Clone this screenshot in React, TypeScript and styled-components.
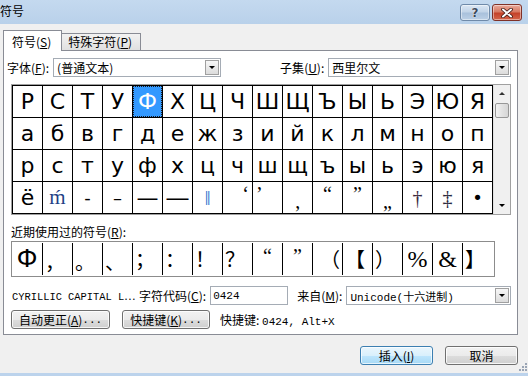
import styled, { createGlobalStyle } from 'styled-components';

const GlobalStyle = createGlobalStyle`
  html, body {
    margin: 0;
    padding: 0;
    background: #f0f0f0;
  }
  body {
    font-family: "Noto Sans CJK SC", "DejaVu Sans", sans-serif;
    font-size: 12px;
    color: #000;
  }
`;

const cjk = `"Noto Sans CJK SC", sans-serif`;
const mono = `"Liberation Mono", "Noto Sans CJK SC", monospace`;

const Window = styled.div`
  position: relative;
  width: 528px;
  height: 376px;
  box-sizing: border-box;
  display: flex;
  flex-direction: column;
  background: #f0f0f0;
  border-bottom: 3px solid #bcd3ec;
  overflow: hidden;
`;

const TitleBar = styled.div`
  height: 24px;
  flex: none;
  display: flex;
  align-items: flex-start;
  background: linear-gradient(#c4d9ef, #b9d1ea);
`;

const Title = styled.div`
  font-family: ${cjk};
  font-size: 12px;
  line-height: 24px;
  margin-top: -1px;
`;

const TitleButtons = styled.div`
  margin-left: auto;
  margin-right: 6px;
  margin-top: 4px;
  display: flex;
  gap: 2px;
`;

const CaptionButton = styled.div<{ $close?: boolean }>`
  width: 30px;
  height: 17px;
  box-sizing: border-box;
  border-radius: 3px;
  border: 1px solid ${(p) => (p.$close ? '#7f3127' : '#6f8aa9')};
  background: ${(p) =>
    p.$close
      ? 'linear-gradient(#e9a99b 0%, #d77a63 45%, #c4422a 55%, #d5654a 100%)'
      : 'linear-gradient(#dbe7f4 0%, #c2d4e8 45%, #a9c1dc 55%, #bcd0e6 100%)'};
  box-shadow: inset 0 0 0 1px rgba(255, 255, 255, 0.45);
  display: flex;
  align-items: center;
  justify-content: center;
`;

const HelpGlyph = styled.span`
  font-family: "DejaVu Sans", sans-serif;
  font-weight: bold;
  font-size: 12px;
  color: #3b4a5c;
  text-shadow: 0 0 1px #fff, 0 0 1px #fff;
  line-height: 1;
`;

const TabRow = styled.div`
  height: 27px;
  flex: none;
  display: flex;
  align-items: flex-end;
  padding-left: 3px;
`;

const Tab = styled.div<{ $active?: boolean }>`
  position: relative;
  z-index: 1;
  box-sizing: border-box;
  height: ${(p) => (p.$active ? '21px' : '17px')};
  margin-bottom: ${(p) => (p.$active ? '0' : '1px')};
  padding: ${(p) => (p.$active ? '3px 10px 0 8px' : '0 8px 0 6px')};
  border: 1px solid #898c95;
  border-bottom: none;
  border-left: ${(p) => (p.$active ? '1px solid #898c95' : 'none')};
  background: ${(p) => (p.$active ? '#fff' : 'linear-gradient(#f2f2f2, #e0e0e0)')};
  font-family: ${cjk};
  font-size: 12px;
  line-height: 16px;
  white-space: nowrap;
`;

const Panel = styled.div`
  flex: none;
  height: 285px;
  margin: -1px 10px 0 3px;
  box-sizing: border-box;
  border: 1px solid #898c95;
  background: #fff;
  padding: 7px 6px 0 7px;
  display: flex;
  flex-direction: column;
`;

const Row = styled.div<{ $top?: number }>`
  display: flex;
  align-items: center;
  height: 19px;
  margin-top: ${(p) => p.$top ?? 0}px;
`;

const FontRow = styled(Row)`
  margin-left: -4px;
`;

const Label = styled.span<{ $gap?: number }>`
  font-family: ${cjk};
  font-size: 12px;
  white-space: nowrap;
  margin-left: ${(p) => p.$gap ?? 0}px;
  margin-right: 4px;
`;

const Combo = styled.div<{ $w?: number }>`
  box-sizing: border-box;
  height: 19px;
  width: ${(p) => (p.$w ? `${p.$w}px` : 'auto')};
  flex: ${(p) => (p.$w ? 'none' : '1')};
  border: 1px solid #a5acb5;
  background: #fff;
  display: flex;
  align-items: center;
  padding-left: 3px;
  font-family: ${cjk};
  font-size: 12px;
`;

const ComboText = styled.span<{ $mono?: boolean }>`
  flex: 1;
  font-family: ${(p) => (p.$mono ? mono : cjk)};
  font-size: ${(p) => (p.$mono ? '11px' : '12px')};
  white-space: nowrap;
`;

const DropButton = styled.div`
  width: 14px;
  height: 15px;
  margin-right: 1px;
  box-sizing: border-box;
  border: 1px solid #a0a0a0;
  background: linear-gradient(#f7f7f7, #dcdcdc);
  display: flex;
  align-items: center;
  justify-content: center;
`;

const Arrow = styled.span<{ $up?: boolean }>`
  width: 0;
  height: 0;
  border-left: 3px solid transparent;
  border-right: 3px solid transparent;
  ${(p) => (p.$up ? 'border-bottom: 3px solid #333;' : 'border-top: 3px solid #000;')}
`;

const GridFrame = styled.div`
  margin-top: 7px;
  width: 500px;
  box-sizing: border-box;
  border: 1px solid #a0a0a0;
  display: flex;
`;

const CharGrid = styled.div`
  display: grid;
  grid-template-columns: repeat(16, 29px);
  grid-auto-rows: 31px;
  gap: 1px;
  padding: 1px;
  background: #000;
`;

const Cell = styled.div<{
  $serif?: boolean;
  $size?: number;
  $v?: 'top' | 'bottom';
  $h?: 'left' | 'right';
  $color?: string;
  $selected?: boolean;
}>`
  background: ${(p) => (p.$selected ? '#3399ff' : '#fff')};
  color: ${(p) => (p.$selected ? '#fff' : p.$color ?? '#000')};
  outline: ${(p) => (p.$selected ? '1px dotted #1a1a1a' : 'none')};
  outline-offset: -1px;
  display: flex;
  align-items: ${(p) => (p.$v === 'top' ? 'flex-start' : p.$v === 'bottom' ? 'flex-end' : 'center')};
  justify-content: ${(p) => (p.$h === 'left' ? 'flex-start' : p.$h === 'right' ? 'flex-end' : 'center')};
  padding: ${(p) => (p.$v ? '2px 3px' : '0 2px')};
  box-sizing: border-box;
  font-family: ${(p) => (p.$serif ? `"Liberation Serif", serif` : `"DejaVu Sans", sans-serif`)};
  font-size: ${(p) => p.$size ?? 22}px;
  line-height: 1;
`;

const ScrollBar = styled.div`
  width: 17px;
  margin-left: 0;
  background: #f0f0f0;
  display: flex;
  flex-direction: column;
  border-left: 1px solid #e0e0e0;
`;

const ScrollArrow = styled.div`
  height: 17px;
  box-sizing: border-box;
  margin: 0 1px;
  display: flex;
  align-items: center;
  justify-content: center;
`;

const ScrollTrack = styled.div`
  flex: 1;
`;

const Thumb = styled.div`
  height: 15px;
  margin: 1px 1px 0;
  box-sizing: border-box;
  border: 1px solid #979797;
  border-radius: 2px;
  background: linear-gradient(90deg, #f3f3f3, #e2e2e2 50%, #d6d6d6);
`;

const RecentLabel = styled.div`
  margin-top: 9px;
  margin-left: 0;
  height: 16px;
  line-height: 16px;
  font-family: ${cjk};
  font-size: 12px;
`;

const RecentBox = styled.div`
  margin-top: 1px;
  width: 484px;
  height: 36px;
  box-sizing: border-box;
  border: 1px solid #8c8c8c;
  display: flex;
`;

const RecentCell = styled.div<{
  $first?: boolean;
  $serif?: boolean;
  $sans?: boolean;
  $size?: number;
  $v?: 'top' | 'bottom';
  $h?: 'left' | 'right';
}>`
  width: 30px;
  flex: none;
  margin: 1px 0;
  box-sizing: border-box;
  border-left: ${(p) => (p.$first ? 'none' : '1px solid #000')};
  display: flex;
  align-items: ${(p) => (p.$v === 'top' ? 'flex-start' : p.$v === 'bottom' ? 'flex-end' : 'center')};
  justify-content: ${(p) => (p.$h === 'left' ? 'flex-start' : p.$h === 'right' ? 'flex-end' : 'center')};
  padding: 3px 2px;
  font-family: ${(p) =>
    p.$sans ? `"DejaVu Sans", sans-serif` : p.$serif ? `"Liberation Serif", serif` : cjk};
  font-size: ${(p) => p.$size ?? 20}px;
  line-height: 1;
  &:last-child {
    flex: 1;
  }
`;

const CharName = styled.span`
  width: 127px;
  flex: none;
  padding-left: 1px;
  font-family: ${mono};
  font-size: 10.4px;
  white-space: nowrap;
  overflow: hidden;
`;

const CodeInput = styled.div`
  width: 78px;
  height: 19px;
  box-sizing: border-box;
  border: 1px solid #a5acb5;
  background: #fff;
  padding-left: 2px;
  display: flex;
  align-items: center;
  font-family: ${mono};
  font-size: 11px;
`;

const Button = styled.div<{ $w: number; $focused?: boolean }>`
  width: ${(p) => p.$w}px;
  height: 19px;
  box-sizing: border-box;
  border: 1px solid ${(p) => (p.$focused ? '#3c7fb1' : '#707070')};
  border-radius: 3px;
  background: ${(p) =>
    p.$focused
      ? 'linear-gradient(#eaf6fd 0%, #d9f0fc 50%, #bee6fd 51%, #a7d9f5 100%)'
      : 'linear-gradient(#f2f2f2 0%, #ebebeb 50%, #dddddd 51%, #cfcfcf 100%)'};
  box-shadow: inset 0 0 0 1px ${(p) => (p.$focused ? 'rgba(255,255,255,0.7)' : 'rgba(255,255,255,0.8)')};
  display: flex;
  align-items: center;
  justify-content: center;
  font-family: ${cjk};
  font-size: 12px;
  white-space: nowrap;
`;

const ButtonGap = styled.div`
  width: 12px;
  flex: none;
`;

const Dots = styled.span`
  font-family: ${mono};
  font-size: 11px;
`;

const ShortcutText = styled.span`
  margin-left: 10px;
  font-family: ${cjk};
  font-size: 12px;
  white-space: nowrap;
`;

const MonoText = styled.span`
  font-family: ${mono};
  font-size: 11px;
`;

const DialogButtons = styled.div`
  margin-top: 11px;
  margin-right: 10px;
  display: flex;
  justify-content: flex-end;
  gap: 12px;
`;

const Grip = styled.svg`
  position: absolute;
  right: 1px;
  bottom: 0;
`;

type Sym = {
  c: string;
  serif?: boolean;
  sans?: boolean;
  size?: number;
  v?: 'top' | 'bottom';
  h?: 'left' | 'right';
  color?: string;
};

const rows = ['РСТУФХЦЧШЩЪЫЬЭЮЯ', 'абвгдежзийклмноп', 'рстуфхцчшщъыьэюя'];

const lastRow: Sym[] = [
  { c: 'ё' },
  { c: 'ḿ', serif: true, size: 21, color: '#1e3f86' },
  { c: '‐', size: 18 },
  { c: '–', size: 18 },
  { c: '—', size: 22 },
  { c: '―', size: 22 },
  { c: '‖', serif: true, size: 22, color: '#3a7ad0' },
  { c: '‘', serif: true, size: 20, v: 'top', h: 'right' },
  { c: '’', serif: true, size: 20, v: 'top', h: 'left' },
  { c: '‚', serif: true, size: 20, v: 'bottom' },
  { c: '“', serif: true, size: 20, v: 'top' },
  { c: '”', serif: true, size: 20, v: 'top' },
  { c: '„', serif: true, size: 20, v: 'bottom' },
  { c: '†', serif: true, size: 20, color: '#3a2a40' },
  { c: '‡', serif: true, size: 20, color: '#2a2a40' },
  { c: '•', size: 18 },
];

const recent: Sym[] = [
  { c: 'Ф', sans: true, size: 24 },
  { c: '，', h: 'left', v: 'bottom' },
  { c: '。', h: 'left', v: 'bottom' },
  { c: '、', h: 'left', v: 'bottom' },
  { c: '；', h: 'left' },
  { c: '：', h: 'left' },
  { c: '！', h: 'left' },
  { c: '？', h: 'left' },
  { c: '“', serif: true, v: 'top', size: 20 },
  { c: '”', serif: true, v: 'top', size: 20 },
  { c: '（', h: 'right' },
  { c: '【', h: 'left' },
  { c: '）', h: 'left' },
  { c: '%', serif: true, size: 24 },
  { c: '&', serif: true, size: 24 },
  { c: '】', h: 'left' },
];

const Hot = ({ k }: { k: string }) => (
  <>
    (<u>{k}</u>)
  </>
);

const App = () => (
  <>
    <GlobalStyle />
    <Window>
      <TitleBar>
        <Title>符号</Title>
        <TitleButtons>
          <CaptionButton>
            <HelpGlyph>?</HelpGlyph>
          </CaptionButton>
          <CaptionButton $close>
            <svg width="12" height="10" viewBox="0 0 12 10">
              <path d="M2 1.5 L10 8.5 M10 1.5 L2 8.5" stroke="#3a1410" strokeWidth="3.6" strokeLinecap="round" />
              <path d="M2 1.5 L10 8.5 M10 1.5 L2 8.5" stroke="#fff" strokeWidth="2" strokeLinecap="round" />
            </svg>
          </CaptionButton>
        </TitleButtons>
      </TitleBar>

      <TabRow>
        <Tab $active>
          符号<Hot k="S" />
        </Tab>
        <Tab>
          特殊字符<Hot k="P" />
        </Tab>
      </TabRow>

      <Panel>
        <FontRow>
          <Label>
            字体<Hot k="F" />:
          </Label>
          <Combo $w={168}>
            <ComboText>(普通文本)</ComboText>
            <DropButton>
              <Arrow />
            </DropButton>
          </Combo>
          <Label $gap={59}>
            子集<Hot k="U" />:
          </Label>
          <Combo>
            <ComboText>西里尔文</ComboText>
            <DropButton>
              <Arrow />
            </DropButton>
          </Combo>
        </FontRow>

        <GridFrame>
          <CharGrid>
            {rows.map((r, ri) =>
              Array.from(r).map((c, ci) => (
                <Cell key={`${ri}-${ci}`} $selected={ri === 0 && ci === 4}>
                  {c}
                </Cell>
              )),
            )}
            {lastRow.map((s, i) => (
              <Cell key={`l-${i}`} $serif={s.serif} $size={s.size} $v={s.v} $h={s.h} $color={s.color}>
                {s.c}
              </Cell>
            ))}
          </CharGrid>
          <ScrollBar>
            <ScrollArrow>
              <Arrow $up />
            </ScrollArrow>
            <Thumb />
            <ScrollTrack />
            <ScrollArrow>
              <Arrow />
            </ScrollArrow>
          </ScrollBar>
        </GridFrame>

        <RecentLabel>
          近期使用过的符号<Hot k="R" />:
        </RecentLabel>
        <RecentBox>
          {recent.map((s, i) => (
            <RecentCell
              key={i}
              $first={i === 0}
              $serif={s.serif}
              $sans={s.sans}
              $size={s.size}
              $v={s.v}
              $h={s.h}
            >
              {s.c}
            </RecentCell>
          ))}
        </RecentBox>

        <Row $top={9}>
          <CharName>CYRILLIC CAPITAL L⋯</CharName>
          <Label>
            字符代码<Hot k="C" />:
          </Label>
          <CodeInput>0424</CodeInput>
          <Label $gap={9}>
            来自<Hot k="M" />:
          </Label>
          <Combo>
            <ComboText $mono>Unicode(十六进制)</ComboText>
            <DropButton>
              <Arrow />
            </DropButton>
          </Combo>
        </Row>

        <Row $top={5}>
          <Button $w={99}>
            自动更正<Hot k="A" />
            <Dots>...</Dots>
          </Button>
          <ButtonGap />
          <Button $w={88}>
            快捷键<Hot k="K" />
            <Dots>...</Dots>
          </Button>
          <ShortcutText>
            快捷键: <MonoText>0424, Alt+X</MonoText>
          </ShortcutText>
        </Row>
      </Panel>

      <DialogButtons>
        <Button $w={73} $focused>
          插入<Hot k="I" />
        </Button>
        <Button $w={73}>取消</Button>
      </DialogButtons>

      <Grip width="11" height="11" viewBox="0 0 11 11">
        {[
          [9, 1],
          [6, 4],
          [9, 4],
          [3, 7],
          [6, 7],
          [9, 7],
        ].map(([x, y], i) => (
          <rect key={i} x={x} y={y} width="2" height="2" fill="#9aa5b5" />
        ))}
      </Grip>
    </Window>
  </>
);

export default App;
